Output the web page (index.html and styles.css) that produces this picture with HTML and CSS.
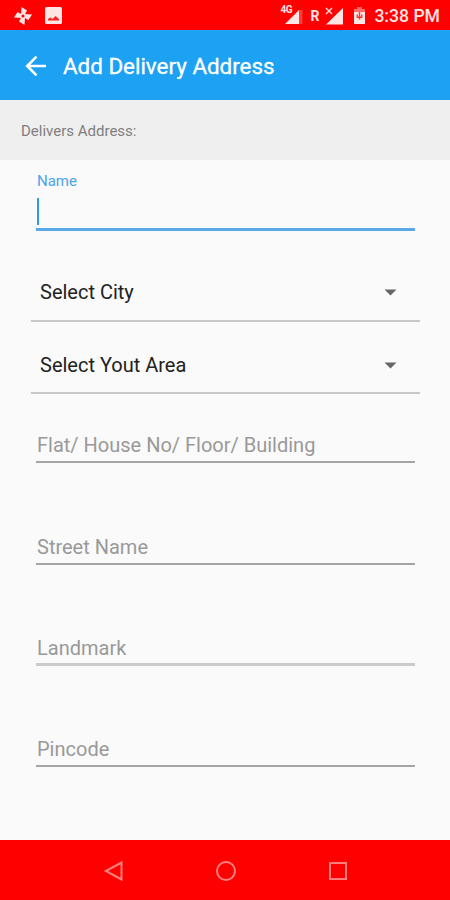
FILE: index.html
```
<!DOCTYPE html>
<html lang="en">
<head>
    <meta charset="UTF-8">
    <meta name="viewport" content="width=device-width, initial-scale=1.0">
    <title>Add Delivery Address</title>
    <link rel="stylesheet" href="styles.css">
</head>
<body>
    <div class="screen">
        <div class="status-bar">
            <svg width="20" height="20" viewBox="0 0 20 20">
                <g fill="#ffe4e4">
                    <path d="M8 9L8.500 1 14 4.500 11.500 9z"/>
                    <path d="M8 9L8.500 1 14 4.500 11.500 9z" transform="rotate(90 10 10)"/>
                    <path d="M8 9L8.500 1 14 4.500 11.500 9z" transform="rotate(180 10 10)"/>
                    <path d="M8 9L8.500 1 14 4.500 11.500 9z" transform="rotate(270 10 10)"/>
                </g>
                <circle cx="10" cy="10" r="1.500" fill="#f00"/>
            </svg>
            <svg class="icon-image" width="17" height="17" viewBox="0 0 17 17">
                <rect width="17" height="17" rx="1.500" fill="#ffe4e4"/>
                <path d="M3 13.500v-1.500l2.500-1.500 2 1.500 3-3 3.500 3v1.500z" fill="#f22"/>
            </svg>
            <div class="status-right">
                <div class="network">
                    <span class="network-type">4G</span>
                    <svg width="18" height="18" viewBox="0 0 18 18">
                        <path d="M14 3h3.500v14H14z" fill="#ff3a3a"/>
                        <path d="M0 17L14 3v14z" fill="#ffe4e4"/>
                    </svg>
                </div>
                <span class="roaming">R</span>
                <svg class="icon-signal" width="20" height="18" viewBox="0 0 20 18">
                    <path d="M1 17.500L18 1v16.500z" fill="#ffe4e4"/>
                    <path d="M1 1l6 6M7 1L1 7" stroke="#ffd0d0" stroke-width="1.500"/>
                </svg>
                <svg class="icon-battery" width="13" height="19" viewBox="0 0 13 19">
                    <path d="M4 1h5v2h3v4H1V3h3z" fill="#ff6868"/>
                    <path d="M1 6h11v12H1z" fill="#ffe4e4"/>
                    <path d="M6.500 6v7.500M4.300 8.500v2.800h4.400V8.500" fill="none" stroke="#f33" stroke-width="1.400"/>
                </svg>
                <span class="time">3:38 PM</span>
            </div>
        </div>

        <div class="app-bar">
            <svg width="22" height="22" viewBox="0 0 22 22" fill="none" stroke="#fff" stroke-width="2.600">
                <path d="M21 11H2.500M11.500 1.700L2.200 11l9.300 9.300"/>
            </svg>
            <h1>Add Delivery Address</h1>
        </div>

        <div class="section-title">Delivers Address:</div>

        <div class="form">
            <div class="field field-active">
                <label class="field-label">Name</label>
                <div class="cursor"></div>
            </div>
            <div class="spinner spinner-city">
                <span>Select City</span>
                <svg width="13" height="7" viewBox="0 0 13 7"><path d="M.5.500h12l-6 6z" fill="#666"/></svg>
            </div>
            <div class="spinner spinner-area">
                <span>Select Yout Area</span>
                <svg width="13" height="7" viewBox="0 0 13 7"><path d="M.5.500h12l-6 6z" fill="#666"/></svg>
            </div>
            <div class="field field-flat">Flat/ House No/ Floor/ Building</div>
            <div class="field field-street">Street Name</div>
            <div class="field field-landmark">Landmark</div>
            <div class="field">Pincode</div>
        </div>

        <div class="nav-bar">
            <svg width="22" height="22" viewBox="0 0 22 22"><path d="M18.500 2.500v17L2.800 11z"/></svg>
            <svg width="22" height="22" viewBox="0 0 22 22"><circle cx="11" cy="11" r="9"/></svg>
            <svg width="22" height="22" viewBox="0 0 22 22"><rect x="3" y="3" width="16" height="16"/></svg>
        </div>
    </div>
</body>
</html>
```
FILE: styles.css
```
* {
    box-sizing: border-box;
}
body {
    margin: 0;
    font-family: Roboto, "Liberation Sans", sans-serif;
    background-color: #fafafa;
}
svg {
    display: block;
    flex-shrink: 0;
}
.screen {
    width: 450px;
    height: 900px;
    display: flex;
    flex-direction: column;
    overflow: hidden;
}
.status-bar {
    height: 30px;
    flex-shrink: 0;
    display: flex;
    align-items: center;
    padding: 1px 10px 0 13px;
    background-color: #ff0000;
    color: #ffe4e4;
}
.icon-image {
    margin-left: 12px;
}
.status-right {
    display: flex;
    align-items: center;
    margin-left: auto;
}
.network {
    position: relative;
    padding-left: 5px;
}
.network-type {
    position: absolute;
    left: 0;
    top: -2px;
    font-size: 10px;
    line-height: 10px;
    font-weight: 700;
    letter-spacing: -0.5px;
}
.roaming {
    margin-left: 7px;
    font-size: 14px;
    font-weight: 700;
}
.icon-signal {
    margin-left: 6px;
}
.icon-battery {
    margin-left: 8px;
}
.time {
    margin-left: 8px;
    font-size: 17.6px;
    font-weight: 500;
    white-space: nowrap;
}
.app-bar {
    height: 70px;
    flex-shrink: 0;
    display: flex;
    align-items: center;
    padding: 1px 0 0 25px;
    background-color: #1da1f2;
    color: #fff;
}
.app-bar h1 {
    margin: 0 0 0 16px;
    font-size: 22.4px;
    font-weight: 400;
    -webkit-text-stroke: 0.3px #fff;
}
.section-title {
    height: 60px;
    flex-shrink: 0;
    padding: 1px 0 0 21px;
    line-height: 60px;
    font-size: 15px;
    color: #808080;
    background-color: #efefef;
}
.form {
    flex: 1;
    padding: 0 30px;
}
.field {
    height: 101px;
    margin: 0 5px 0 6px;
    padding: 0 0 4px 1px;
    display: flex;
    flex-direction: column;
    justify-content: flex-end;
    font-size: 20px;
    line-height: 24px;
    color: #999;
    border-bottom: 2px solid #a5a5a5;
}
.field-active {
    height: 71px;
    padding-bottom: 3px;
    border-bottom: 3px solid #5aa9e6;
}
.field-label {
    margin-bottom: 7px;
    font-size: 15px;
    line-height: 20px;
    color: #4ba3e8;
}
.cursor {
    width: 2px;
    height: 27px;
    background-color: #2d9be8;
}
.spinner {
    display: flex;
    align-items: center;
    justify-content: space-between;
    margin-left: 1px;
    padding: 2px 23px 0 9px;
    font-size: 20px;
    color: #222;
    border-bottom: 2px solid #c8c8c8;
}
.spinner-city {
    height: 60px;
    margin-top: 31px;
}
.spinner-area {
    height: 58px;
    margin-top: 14px;
}
.field-flat {
    height: 69px;
    padding-bottom: 4px;
}
.field-street {
    height: 102px;
}
.field-landmark {
    padding-bottom: 3px;
    border-bottom: 3px solid #cbcbcb;
}
.nav-bar {
    height: 60px;
    flex-shrink: 0;
    display: flex;
    align-items: center;
    justify-content: space-between;
    padding: 1px 101px 0 103px;
    background-color: #ff0000;
}
.nav-bar svg {
    fill: none;
    stroke: #ff7f7f;
    stroke-width: 2;
}
```
